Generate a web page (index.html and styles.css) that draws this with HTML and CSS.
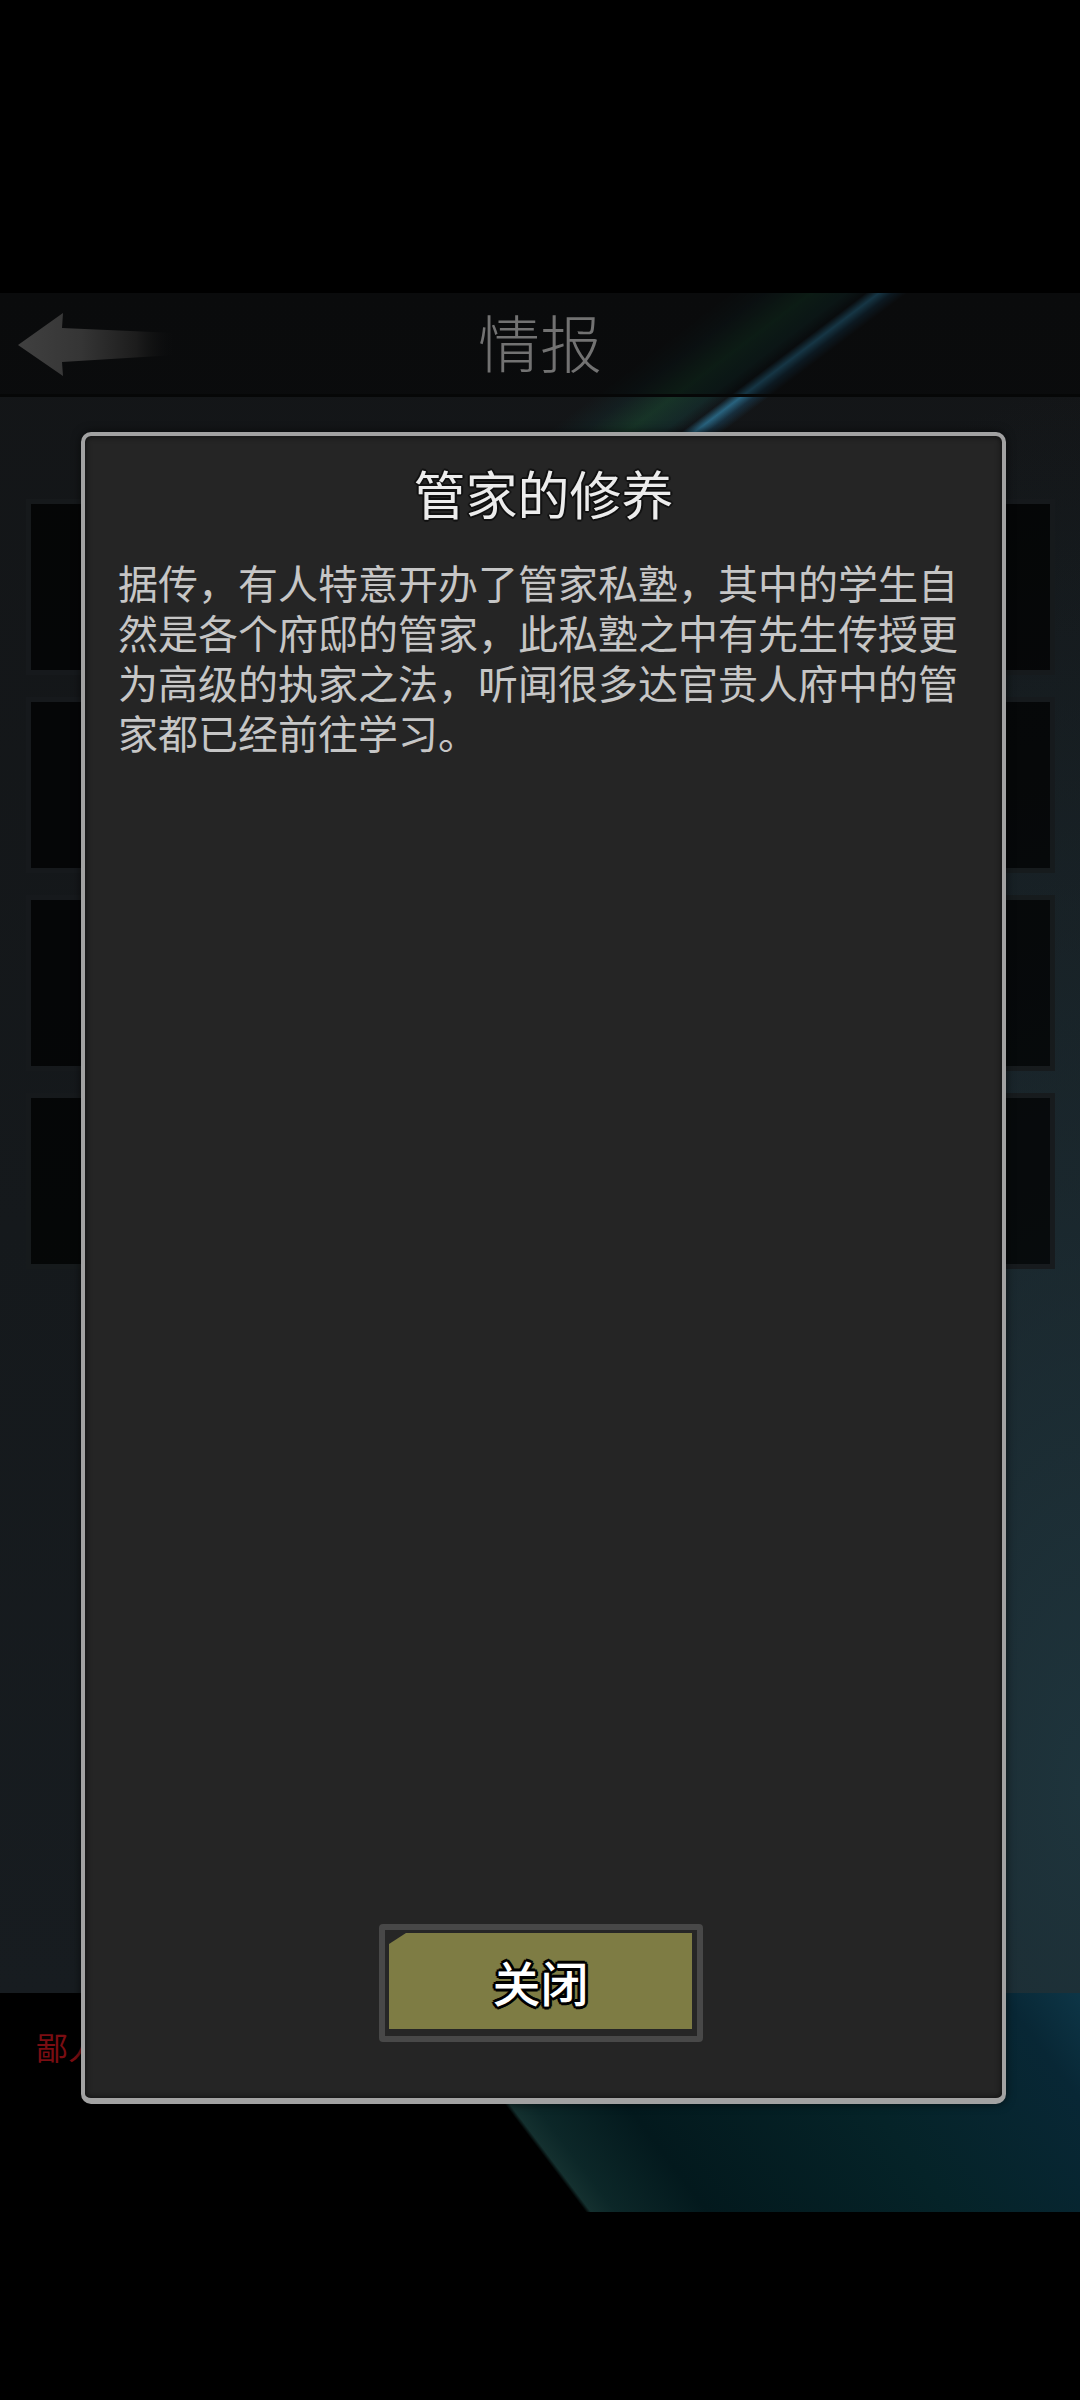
FILE: index.html
```html
<!DOCTYPE html>
<html lang="zh-CN">
<head>
<meta charset="utf-8">
<title>情报</title>
<link rel="stylesheet" href="styles.css">
</head>
<body>
  <div class="top-gap"></div>
  <main class="game">
    <div class="stage">
      <header class="bar">
        <div class="back">
          <svg width="180" height="104" viewBox="0 0 180 104">
            <defs>
              <linearGradient id="shaft" x1="18" y1="0" x2="176" y2="0" gradientUnits="userSpaceOnUse">
                <stop offset="0" stop-color="#404040"/>
                <stop offset="0.4" stop-color="#353535"/>
                <stop offset="0.75" stop-color="#1c1c1c"/>
                <stop offset="1" stop-color="#0b0c0d" stop-opacity="0"/>
              </linearGradient>
            </defs>
            <path d="M18 52 L63 20 L62 35 L176 40 L176 62 L62 69 L63 83 Z" fill="url(#shaft)"/>
          </svg>
        </div>
        <h1 class="bar-title">情报</h1>
        <div class="bar-side"></div>
      </header>
      <section class="list">
        <div class="card"></div>
        <div class="card"></div>
        <div class="card"></div>
        <div class="card"></div>
      </section>
    </div>
    <footer class="foot">
      <span class="note">鄙人</span>
    </footer>

    <div class="dialog">
      <h2 class="dialog-title">管家的修养</h2>
      <p class="dialog-text">据传，有人特意开办了管家私塾，其中的学生自然是各个府邸的管家，此私塾之中有先生传授更为高级的执家之法，听闻很多达官贵人府中的管家都已经前往学习。</p>
      <div class="dialog-actions">
        <button class="btn-close"><span class="btn-face">关闭</span></button>
      </div>
    </div>
  </main>
</body>
</html>
```
FILE: styles.css
```css
html, body {
  margin: 0;
  padding: 0;
  background: #000;
}

body {
  width: 1080px;
  height: 2400px;
  overflow: hidden;
  font-family: "Noto Sans CJK SC", "Noto Sans", sans-serif;
}

.top-gap {
  height: 293px;
}

.game {
  position: relative;
  width: 1080px;
  height: 1919px;
}

/* header + list area, with the light swoosh crossing the top */
.stage {
  height: 1700px;
  display: flex;
  flex-direction: column;
  background:
    linear-gradient(143deg,
      rgba(0, 0, 0, 0) 440px,
      rgba(20, 62, 62, 0.22) 462px,
      rgba(28, 88, 58, 0.45) 488px,
      rgba(22, 74, 70, 0.35) 510px,
      rgba(10, 30, 40, 0.15) 521px,
      rgba(46, 118, 152, 0.8) 529px,
      rgba(30, 92, 130, 0.35) 537px,
      rgba(0, 0, 0, 0) 546px) 0 0 / 1080px 200px no-repeat,
    radial-gradient(ellipse 560px 1400px at 100% 88%, rgba(30, 52, 60, 1), rgba(30, 50, 58, 0.6) 40%, rgba(30, 50, 58, 0) 100%),
    linear-gradient(180deg, #131517 0%, #15191c 55%, #171c20 100%);
}

.bar {
  height: 101px;
  border-bottom: 3px solid #060707;
  background: rgba(0, 0, 0, 0.45);
  display: grid;
  grid-template-columns: 180px 1fr 180px;
  align-items: center;
}

.back {
  height: 104px;
  display: flex;
  align-items: flex-start;
}

.back svg {
  display: block;
}

.bar-title {
  margin: 0;
  padding-bottom: 8px;
  text-align: center;
  font-size: 62px;
  line-height: 62px;
  font-weight: 300;
  color: #727272;
}

.list {
  padding: 102px 25px 0 26px;
  display: flex;
  flex-direction: column;
  gap: 22px;
}

.card {
  height: 166px;
  border: 5px solid rgba(36, 42, 46, 0.55);
  background: rgba(0, 0, 0, 0.72);
}

.foot {
  height: 219px;
  padding: 37px 0 0 36px;
  box-sizing: border-box;
  background: linear-gradient(53deg,
    #000 0px,
    #000 468px,
    #14302f 472px,
    #0c2728 492px,
    #03191d 565px,
    #052328 760px,
    #082735 930px,
    #0d3546 992px);
}

.note {
  font-size: 32px;
  line-height: 32px;
  color: #7a0d12;
}

/* the modal sheet sitting over the list */
.dialog {
  position: absolute;
  left: 81px;
  top: 139px;
  width: 925px;
  height: 1672px;
  box-sizing: border-box;
  border: 4px solid #a2a2a2;
  border-bottom-width: 6px;
  border-radius: 10px;
  background: #252525;
  box-shadow: inset 0 0 6px rgba(0, 0, 0, 0.7), 0 0 10px rgba(0, 0, 0, 0.6);
  display: flex;
  flex-direction: column;
}

.dialog-title {
  margin: 31px 0 0;
  text-align: center;
  font-size: 52px;
  line-height: 52px;
  font-weight: 400;
  color: #ececec;
  text-shadow:
    2px 0 0 #111, -2px 0 0 #111, 0 2px 0 #111, 0 -2px 0 #111,
    1px 1px 1px #111, -1px 1px 1px #111, 1px -1px 1px #111, -1px -1px 1px #111;
}

.dialog-text {
  margin: 38px 0 0;
  padding: 0 42px 0 33px;
  font-size: 40px;
  line-height: 50px;
  color: #c6c6c6;
  flex: 1;
}

.dialog-actions {
  display: flex;
  justify-content: center;
  padding: 0 5px 56px 0;
}

.btn-close {
  width: 324px;
  height: 118px;
  box-sizing: border-box;
  padding: 3px 5px 7px 4px;
  border: 6px solid #484848;
  border-radius: 4px;
  background: #262626;
  display: flex;
  cursor: pointer;
}

.btn-face {
  flex: 1;
  display: flex;
  align-items: center;
  justify-content: center;
  background: #7e7c44;
  clip-path: polygon(0 11px, 17px 0, 100% 0, 100% 100%, 0 100%);
  font-family: "Noto Sans CJK SC", "Noto Sans", sans-serif;
  font-size: 48px;
  line-height: 48px;
  font-weight: 500;
  color: #fff;
  text-shadow:
    3px 0 0 #000, -3px 0 0 #000, 0 3px 0 #000, 0 -3px 0 #000,
    2px 2px 0 #000, -2px 2px 0 #000, 2px -2px 0 #000, -2px -2px 0 #000,
    0 0 3px #000;
}
```
